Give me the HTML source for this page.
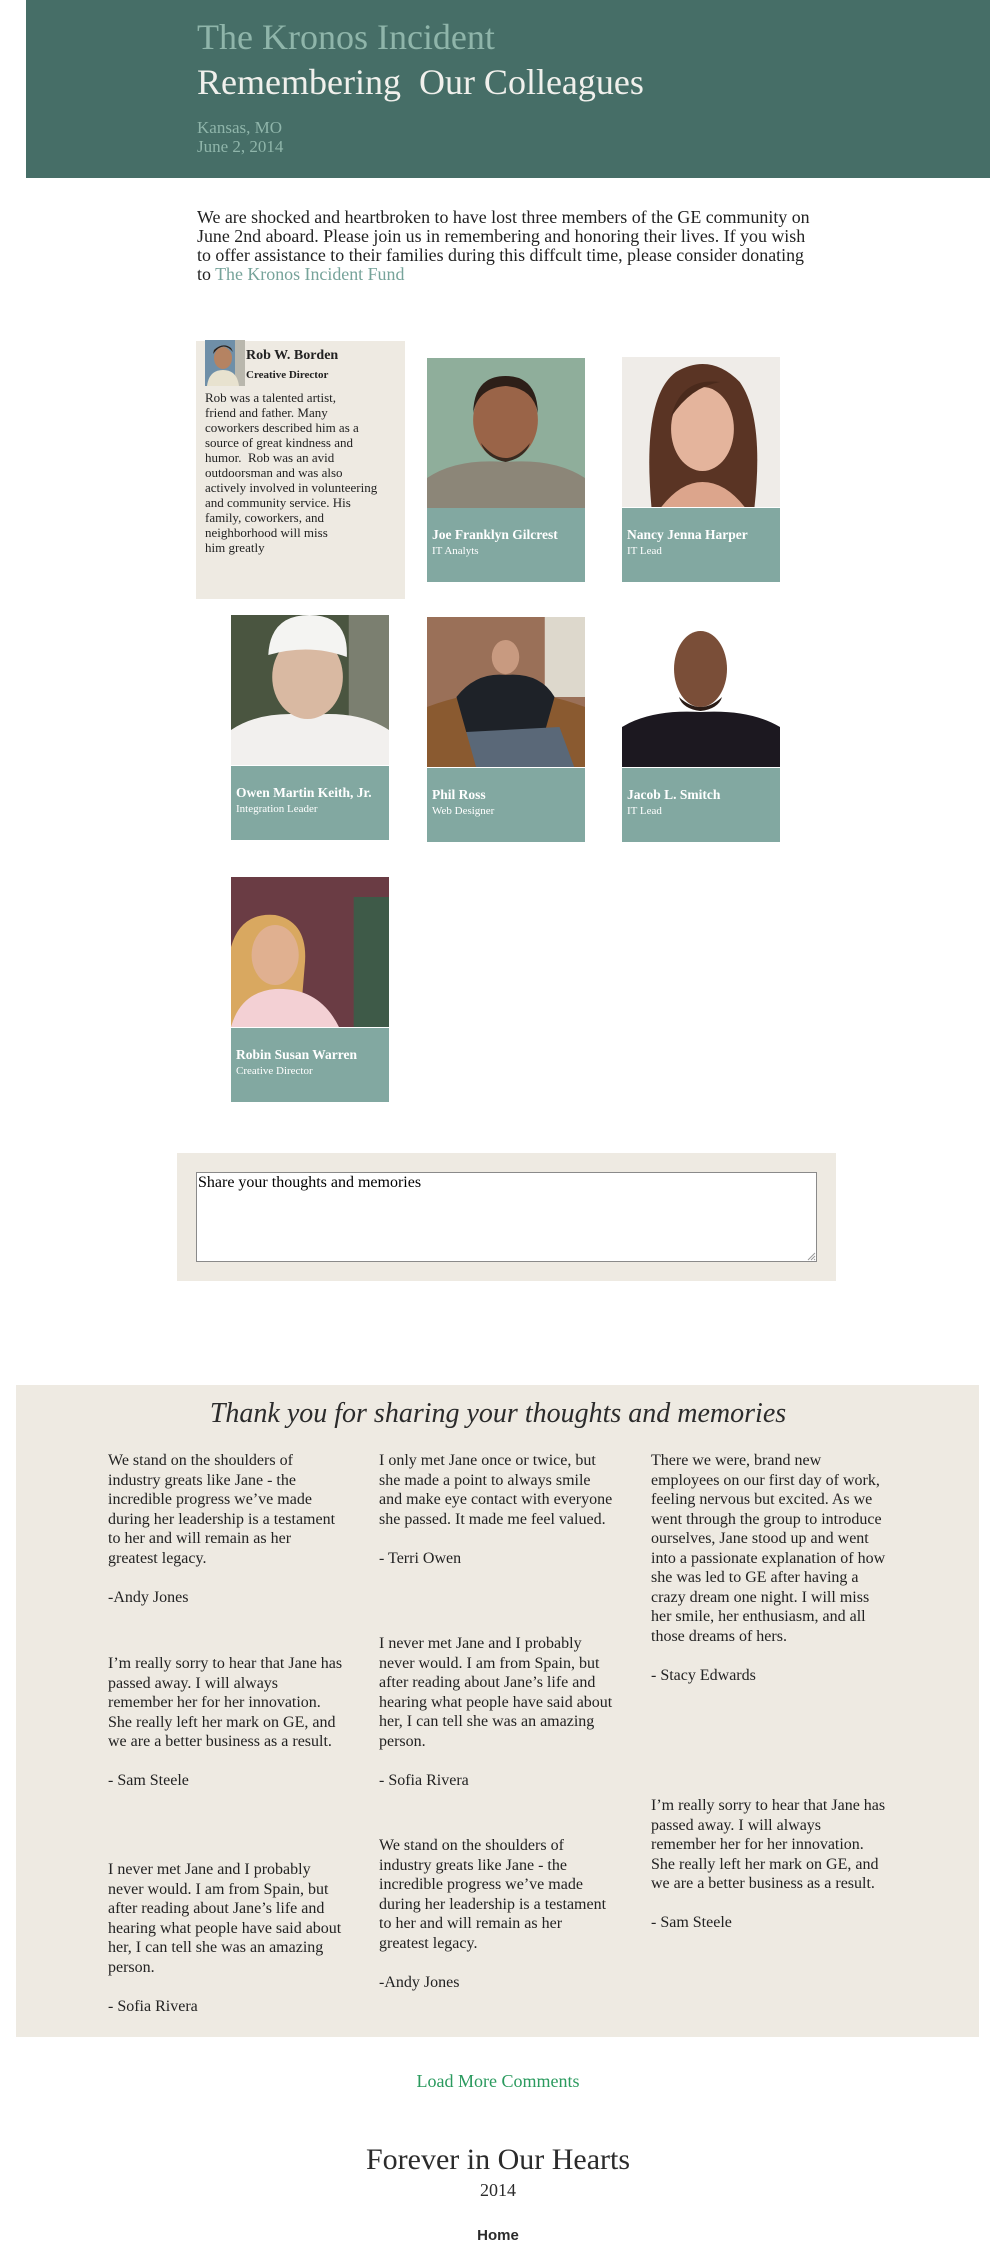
<!DOCTYPE html>
<html><head><meta charset="utf-8"><style>
*{margin:0;padding:0;box-sizing:border-box}
body{width:1000px;height:2258px;position:relative;background:#fff;font-family:"Liberation Serif",serif;color:#222;overflow:hidden}
.a{position:absolute;white-space:nowrap}
.hdr{position:absolute;left:26px;top:0;width:964px;height:178px;background:#466e67}
.card{position:absolute;width:158px}
.img{position:absolute;left:0;top:0;width:158px;height:150px;overflow:hidden}
.lbl{position:absolute;left:0;width:158px;height:74px;background:#82a8a1;color:#fff}
.lbl b{position:absolute;left:5px;top:19px;font-size:13.5px;white-space:nowrap}
.lbl span{position:absolute;left:5px;top:37px;font-size:11px;white-space:nowrap}
.cm{position:absolute;font-size:16px;line-height:19.5px;white-space:nowrap;color:#222}
</style></head><body>

<div class="hdr"></div>
<div class="a" style="left:197px;top:15px;font-size:36px;line-height:44px;color:#8fb5aa">The Kronos Incident</div>
<div class="a" style="left:197px;top:60px;font-size:36px;line-height:44px;color:#f0f0ec">Remembering&nbsp; Our Colleagues</div>
<div class="a" style="left:197px;top:118px;font-size:17px;line-height:19px;color:#8fb5aa">Kansas, MO<br>June 2, 2014</div>

<div class="a" style="left:197px;top:208px;font-size:17.9px;line-height:19px;color:#222">We are shocked and heartbroken to have lost three members of the GE community on<br>June 2nd aboard. Please join us in remembering and honoring their lives. If you wish<br>to offer assistance to their families during this diffcult time, please consider donating<br>to <span style="color:#76a39a">The Kronos Incident Fund</span></div>

<!-- Rob card -->
<div class="a" style="left:196px;top:341px;width:209px;height:258px;background:#eeeae2"></div>
<svg class="a" style="left:205px;top:340px" width="40" height="46" viewBox="0 0 40 46">
<rect width="40" height="46" fill="#6f8fa8"/><rect x="30" width="10" height="46" fill="#b9b7ad"/>
<ellipse cx="18" cy="18" rx="9" ry="11" fill="#b58362"/><path d="M8 14 Q18 0 28 12 L26 8 Q18 2 9 10Z" fill="#2c2018"/>
<path d="M2 46 Q4 30 18 30 Q32 30 34 46Z" fill="#e8e2cf"/></svg>
<div class="a" style="left:246px;top:348px;font-size:14px;font-weight:bold;color:#222">Rob W. Borden</div>
<div class="a" style="left:246px;top:369px;font-size:11px;font-weight:bold;color:#222">Creative Director</div>
<div class="a" style="left:205px;top:390px;font-size:13px;line-height:15px;color:#222">Rob was a talented artist,<br>friend and father. Many<br>coworkers described him as a<br>source of great kindness and<br>humor.&nbsp; Rob was an avid<br>outdoorsman and was also<br>actively involved in volunteering<br>and community service. His<br>family, coworkers, and<br>neighborhood will miss<br>him greatly</div>

<!-- Joe -->
<div class="card" style="left:427px;top:358px">
<svg class="img" width="158" height="150" viewBox="0 0 161 150" preserveAspectRatio="none"><rect width="161" height="150" fill="#8fae9b"/>
<path d="M0 150 L0 120 Q30 100 80 104 Q130 100 161 120 L161 150Z" fill="#8c8678"/>
<ellipse cx="80" cy="62" rx="33" ry="40" fill="#9a6448"/><path d="M47 55 Q48 18 80 18 Q112 18 113 55 Q108 30 80 28 Q52 30 47 55Z" fill="#2d1f18"/>
<path d="M55 85 Q80 115 105 85 Q100 100 80 104 Q60 100 55 85Z" fill="#3a2a20"/></svg>
<div class="lbl" style="top:150px"><b>Joe Franklyn Gilcrest</b><span>IT Analyts</span></div></div>

<!-- Nancy -->
<div class="card" style="left:622px;top:357px">
<svg class="img" width="158" height="150" viewBox="0 0 161 150" preserveAspectRatio="none"><rect width="161" height="150" fill="#efece8"/>
<path d="M30 150 Q20 40 55 15 Q90 -5 120 25 Q145 60 135 150Z" fill="#5a3424"/>
<ellipse cx="82" cy="72" rx="32" ry="42" fill="#e4b49c"/><path d="M50 60 Q60 20 100 25 Q70 30 50 60Z" fill="#4a2a1c"/>
<path d="M40 150 Q60 125 82 125 Q105 125 125 150Z" fill="#dca58c"/></svg>
<div class="lbl" style="top:151px"><b>Nancy Jenna Harper</b><span>IT Lead</span></div></div>

<!-- Owen -->
<div class="card" style="left:231px;top:615px">
<svg class="img" width="158" height="150" viewBox="0 0 161 150" preserveAspectRatio="none"><rect width="161" height="150" fill="#4a5540"/>
<rect x="120" width="41" height="150" fill="#7b7f70"/>
<path d="M0 150 L0 115 Q30 95 80 100 Q130 95 161 115 L161 150Z" fill="#f2f0ee"/>
<ellipse cx="78" cy="62" rx="36" ry="42" fill="#d9b9a2"/><path d="M38 40 Q40 0 80 0 Q120 0 118 42 Q80 28 38 40Z" fill="#f4f4f2"/></svg>
<div class="lbl" style="top:151px"><b>Owen Martin Keith, Jr.</b><span>Integration Leader</span></div></div>

<!-- Phil -->
<div class="card" style="left:427px;top:617px">
<svg class="img" width="158" height="150" viewBox="0 0 161 150" preserveAspectRatio="none"><rect width="161" height="150" fill="#9a7058"/>
<rect x="120" width="41" height="80" fill="#ddd8cc"/><path d="M0 90 Q80 60 161 90 L161 150 L0 150Z" fill="#8a5a30"/>
<ellipse cx="80" cy="40" rx="14" ry="17" fill="#c89a80"/>
<path d="M30 80 Q50 55 80 58 Q115 55 130 80 L120 115 L40 115Z" fill="#1e2228"/>
<path d="M40 115 L135 110 L150 150 L50 150Z" fill="#5a6878"/></svg>
<div class="lbl" style="top:151px"><b>Phil Ross</b><span>Web Designer</span></div></div>

<!-- Jacob -->
<div class="card" style="left:622px;top:617px">
<svg class="img" width="158" height="150" viewBox="0 0 161 150" preserveAspectRatio="none"><rect width="161" height="150" fill="#fff"/>
<path d="M0 150 L0 110 Q30 92 80 95 Q130 92 161 110 L161 150Z" fill="#1c1820"/>
<ellipse cx="80" cy="52" rx="27" ry="38" fill="#7a4e38"/><path d="M58 80 Q80 100 102 80 Q98 92 80 94 Q62 92 58 80Z" fill="#2a1c16"/></svg>
<div class="lbl" style="top:151px"><b>Jacob L. Smitch</b><span>IT Lead</span></div></div>

<!-- Robin -->
<div class="card" style="left:231px;top:877px">
<svg class="img" width="158" height="150" viewBox="0 0 161 150" preserveAspectRatio="none"><rect width="161" height="150" fill="#6a3c44"/>
<rect x="125" y="20" width="36" height="130" fill="#3e5a48"/>
<path d="M0 70 Q10 35 45 38 Q80 45 75 90 L70 150 L0 150Z" fill="#d9a860"/>
<ellipse cx="45" cy="78" rx="24" ry="30" fill="#e0b090"/>
<path d="M0 150 Q10 115 45 112 Q90 110 110 150Z" fill="#f3d0d4"/></svg>
<div class="lbl" style="top:151px"><b>Robin Susan Warren</b><span>Creative Director</span></div></div>

<!-- form -->
<div class="a" style="left:177px;top:1153px;width:659px;height:128px;background:#eeeae2"></div>
<div class="a" style="left:196px;top:1172px;width:621px;height:90px;background:#fff;border:1px solid #8a8a8a;font-size:16px;line-height:19px;padding:0 1px;color:#000">Share your thoughts and memories</div>
<svg class="a" style="left:806px;top:1251px" width="10" height="10"><path d="M9 2 L2 9 M9 5 L5 9 M9 8 L8 9" stroke="#999" stroke-width="1"/></svg>

<!-- comments -->
<div class="a" style="left:16px;top:1385px;width:963px;height:652px;background:#eeeae2"></div>
<div class="a" style="left:0;width:996px;text-align:center;top:1398px;font-size:28px;font-style:italic;color:#2b2b2b">Thank you for sharing your thoughts and memories</div>

<div class="cm" style="left:108px;top:1451px">We stand on the shoulders of<br>industry greats like Jane - the<br>incredible progress we’ve made<br>during her leadership is a testament<br>to her and will remain as her<br>greatest legacy.<br><br>-Andy Jones</div>
<div class="cm" style="left:108px;top:1654px">I’m really sorry to hear that Jane has<br>passed away. I will always<br>remember her for her innovation.<br>She really left her mark on GE, and<br>we are a better business as a result.<br><br>- Sam Steele</div>
<div class="cm" style="left:108px;top:1860px">I never met Jane and I probably<br>never would. I am from Spain, but<br>after reading about Jane’s life and<br>hearing what people have said about<br>her, I can tell she was an amazing<br>person.<br><br>- Sofia Rivera</div>

<div class="cm" style="left:379px;top:1451px">I only met Jane once or twice, but<br>she made a point to always smile<br>and make eye contact with everyone<br>she passed. It made me feel valued.<br><br>- Terri Owen</div>
<div class="cm" style="left:379px;top:1634px">I never met Jane and I probably<br>never would. I am from Spain, but<br>after reading about Jane’s life and<br>hearing what people have said about<br>her, I can tell she was an amazing<br>person.<br><br>- Sofia Rivera</div>
<div class="cm" style="left:379px;top:1836px">We stand on the shoulders of<br>industry greats like Jane - the<br>incredible progress we’ve made<br>during her leadership is a testament<br>to her and will remain as her<br>greatest legacy.<br><br>-Andy Jones</div>

<div class="cm" style="left:651px;top:1451px">There we were, brand new<br>employees on our first day of work,<br>feeling nervous but excited. As we<br>went through the group to introduce<br>ourselves, Jane stood up and went<br>into a passionate explanation of how<br>she was led to GE after having a<br>crazy dream one night. I will miss<br>her smile, her enthusiasm, and all<br>those dreams of hers.<br><br>- Stacy Edwards</div>
<div class="cm" style="left:651px;top:1796px">I’m really sorry to hear that Jane has<br>passed away. I will always<br>remember her for her innovation.<br>She really left her mark on GE, and<br>we are a better business as a result.<br><br>- Sam Steele</div>

<div class="a" style="left:0;width:996px;text-align:center;top:2071px;font-size:18px;color:#2a9a5e">Load More Comments</div>
<div class="a" style="left:0;width:996px;text-align:center;top:2143px;font-size:30px;line-height:34px;color:#2b2b2b">Forever in Our Hearts</div>
<div class="a" style="left:0;width:996px;text-align:center;top:2179px;font-size:18px;line-height:22px;color:#2b2b2b">2014</div>
<div class="a" style="left:0;width:996px;text-align:center;top:2227px;font-family:'Liberation Sans',sans-serif;font-weight:bold;font-size:15px;color:#2b2b2b">Home</div>
</body></html>
